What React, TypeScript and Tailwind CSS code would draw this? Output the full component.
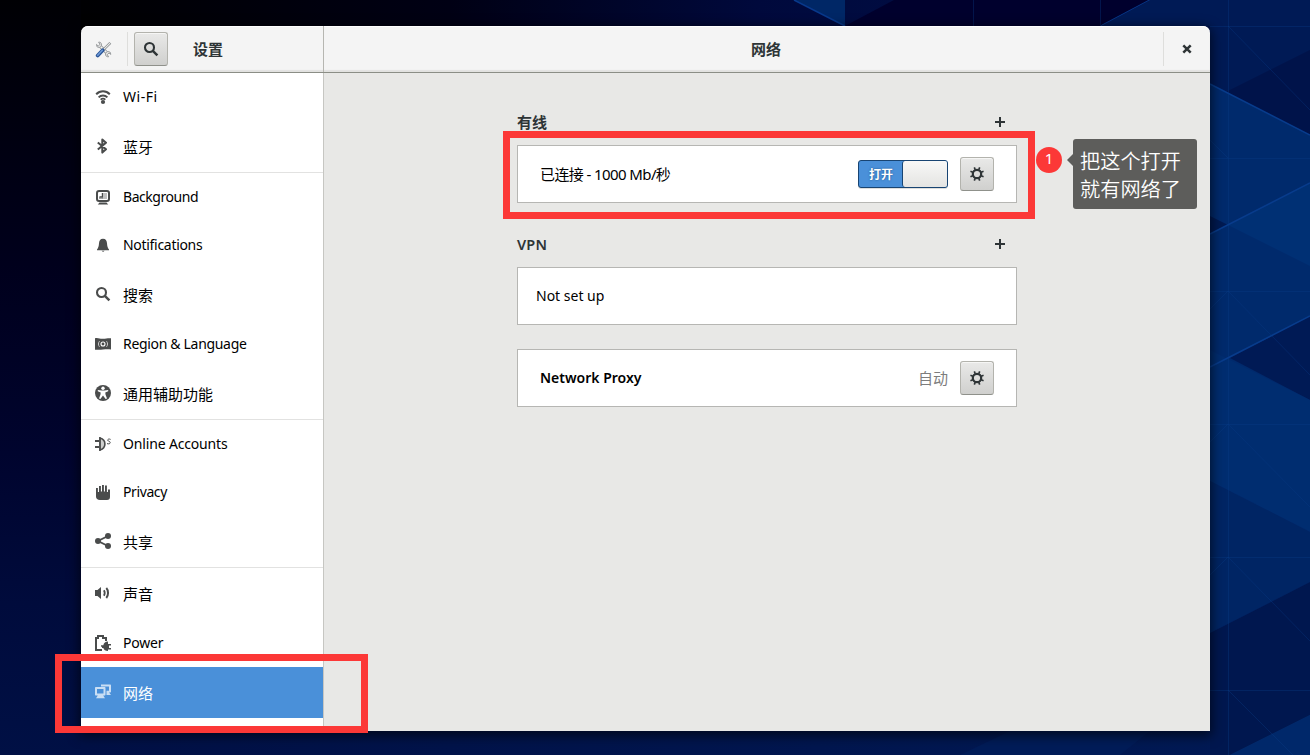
import type { ReactNode } from "react";

function Icon({ children, className = "" }: { children: ReactNode; className?: string }) {
  return (
    <svg width="16" height="16" viewBox="0 0 16 16" fill="currentColor" className={"block shrink-0 " + className}>
      {children}
    </svg>
  );
}

const icons: Record<string, ReactNode> = {
  wifi: (
    <>
      <path d="M1.2 5.200C5 1.400 11 1.400 14.800 5.200" fill="none" stroke="currentColor" strokeWidth="2" />
      <path d="M3.600 8.300C6 5.900 10 5.900 12.400 8.300" fill="none" stroke="currentColor" strokeWidth="1.900" />
      <path d="M5.600 10.600C7 9.400 9 9.400 10.400 10.600" fill="none" stroke="currentColor" strokeWidth="1.600" />
      <circle cx="8" cy="13" r="2.100" />
    </>
  ),
  bluetooth: (
    <path d="M2.800 4.400 11 11.300 7.300 14.600V1.400L11 4.700 2.800 11.600" fill="none" stroke="currentColor" strokeWidth="2" strokeLinejoin="round" />
  ),
  background: (
    <>
      <rect x="2" y="1.900" width="12" height="10.200" rx="2" fill="none" stroke="currentColor" strokeWidth="2" />
      <rect x="7.600" y="4" width="4.400" height="6" opacity=".35" />
      <path d="M4 8.800h4V4H6.800v3.200L4.600 7.200zM4 9.400h4v.6H4z" />
      <path d="M4.500 13.600h7l1.700 1.900H2.800z" />
    </>
  ),
  bell: (
    <>
      <path d="M8 1.800c2.800 0 3.800 2 4 4.400.2 3 .6 4.400 2 6.200v.8H2v-.8c1.400-1.800 1.800-3.200 2-6.200.2-2.400 1.200-4.400 4-4.400z" />
      <path d="M6.600 13.800h3L8.400 14.800H7.800z" />
    </>
  ),
  search: (
    <>
      <circle cx="6.500" cy="6.500" r="4.500" fill="none" stroke="currentColor" strokeWidth="2.100" />
      <path d="m9.800 9.800 4.600 4.600" stroke="currentColor" strokeWidth="2.400" />
    </>
  ),
  region: (
    <>
      <path d="M0 2.200c3-.8 5 .8 8 .6 3-.4 5-.8 8-.6v11.200c-3-.4-5-.2-8 0-3 .4-5 .2-8 .4z" />
      <circle cx="8" cy="8" r="2" fill="none" stroke="#fff" strokeWidth="1.100" />
      <path d="M4.500 5.200c-1.400 1.600-1.400 4 0 5.600M11.500 5.200c1.400 1.600 1.400 4 0 5.600" fill="none" stroke="#d8d8d8" strokeWidth=".9" />
    </>
  ),
  access: (
    <>
      <circle cx="8" cy="8" r="8" />
      <circle cx="8" cy="3.300" r="1.700" fill="#fff" />
      <path d="M2.800 4.900 6.600 5.500h2.800L13.200 4.900v1.400L10.300 7.500l.2 2 1.500 4-1.400.6L8 10.400 5.400 14.100l-1.400-.6 1.500-4 .2-2-2.900-1.200z" fill="#fff" />
    </>
  ),
  online: (
    <>
      <path d="M0 4.100h4v1.800H0zM0 10.100h4v1.800H0z" />
      <path d="M5 2c3 .8 4.900 3.200 4.900 6S8 13.200 5 14z" fill="#cfd0cf" stroke="currentColor" strokeWidth="1.600" />
      <path d="M4 1h1.800v14H4z" opacity=".8" />
      <path d="M15.600 3.400c-1.600-.8-3.200-.2-2.800 1 .4 1 2.200.8 2.400 2 .2 1.400-1.600 1.800-3.200 1.200" fill="none" stroke="currentColor" strokeWidth="1" />
    </>
  ),
  hand: (
    <path d="M1 4h1.900v4H4V2h1.900v5.500H7V1h1.900v6.500H10V1.600h1.900V8H13V5.500h2V13c0 2-1 3-3 3H5c-2.500 0-4-1.200-4-3.500z" />
  ),
  share: (
    <>
      <circle cx="3" cy="8" r="3" />
      <circle cx="13" cy="3" r="3" />
      <circle cx="13" cy="13" r="3" />
      <path d="M13 3 3 8l10 5" fill="none" stroke="currentColor" strokeWidth="1.900" />
    </>
  ),
  sound: (
    <>
      <path d="M0 5h2.500L6 2v12l-3.500-3H0z" />
      <path d="M8.900 5.300c1 1.600 1 3.800 0 5.400" fill="none" stroke="currentColor" strokeWidth="1.800" />
      <path d="M11.300 3c2.300 2.400 2.300 7.600 0 10" fill="none" stroke="currentColor" strokeWidth="2" />
    </>
  ),
  power: (
    <>
      <path d="M7 15H1V3h2V1h5v2h3v3" fill="none" stroke="currentColor" strokeWidth="2" />
      <path d="M6 10.200h2.300c.7-2.200 2-3.600 4.700-3.600V9h3v1.600h-2V13h2v1.600h-3V16c-2.700 0-4-1-4.700-3H7v-1.200H6z" />
    </>
  ),
  network: (
    <>
      <path fillRule="evenodd" d="M1 3h8.500c.6 0 1 .4 1 1v6.500c0 .6-.4 1-1 1h-1.300l1.800 2.700H1l1.800-2.700H1c-.6 0-1-.4-1-1V4c0-.6.4-1 1-1zm1 2v4.500h6.500V5z" />
      <path d="M6 .4h9c.6 0 1 .4 1 1v6c0 .6-.4 1-1 1h-1l2 2.600h-4.500V6.800H14V2.400H6z" />
    </>
  ),
};

type Entry = { icon: string; label: string; cjk?: boolean; line?: boolean; active?: boolean; track?: string };

const entries: Entry[] = [
  { icon: "wifi", label: "Wi-Fi", track: "tracking-[0.5px]" },
  { icon: "bluetooth", label: "蓝牙", cjk: true, line: true },
  { icon: "background", label: "Background", track: "tracking-[-0.45px]" },
  { icon: "bell", label: "Notifications", track: "tracking-[-0.3px]" },
  { icon: "search", label: "搜索", cjk: true },
  { icon: "region", label: "Region & Language", track: "tracking-[-0.32px]" },
  { icon: "access", label: "通用辅助功能", cjk: true, line: true },
  { icon: "online", label: "Online Accounts", track: "tracking-[-0.16px]" },
  { icon: "hand", label: "Privacy", track: "tracking-[-0.4px]" },
  { icon: "share", label: "共享", cjk: true, line: true },
  { icon: "sound", label: "声音", cjk: true },
  { icon: "power", label: "Power", track: "tracking-[-0.2px]" },
  { icon: "network", label: "网络", cjk: true, active: true },
];

function SidebarRow({ e }: { e: Entry }) {
  return (
    <li
      className={
        "flex shrink-0 items-start gap-3 pl-3.5 " +
        (e.cjk ? "pt-[17px] " : "h-12 pt-4 ") +
        (e.cjk ? (e.line ? "h-[52px] border-b border-[#e2e2e1] " : "h-[51px] ") : "") +
        (e.active ? "bg-[#4a90d9] text-white" : "text-black")
      }
    >
      <Icon className={e.active ? "text-[#c9def4]" : "text-[#4a4c4c]"}>{icons[e.icon]}</Icon>
      <span className={e.cjk ? "mt-px text-[15px] leading-4" : "text-sm leading-4 " + e.track}>{e.label}</span>
    </li>
  );
}

function Wallpaper() {
  return (
    <svg width="1310" height="755" viewBox="0 0 1310 755" className="absolute inset-0">
      <defs>
        <linearGradient id="left" x1="0" y1="0" x2="0" y2="1">
          <stop offset="0" stopColor="#000004" />
          <stop offset=".35" stopColor="#00001c" />
          <stop offset=".6" stopColor="#00042e" />
          <stop offset=".8" stopColor="#000b3c" />
          <stop offset="1" stopColor="#001045" />
        </linearGradient>
        <linearGradient id="top" x1="0" y1="0" x2="1" y2="0">
          <stop offset="0" stopColor="#000002" />
          <stop offset=".3" stopColor="#000014" />
          <stop offset=".55" stopColor="#00093c" />
          <stop offset="1" stopColor="#001550" />
        </linearGradient>
        <linearGradient id="bottom" x1="0" y1="0" x2="1" y2="0">
          <stop offset="0" stopColor="#001045" />
          <stop offset=".6" stopColor="#00164f" />
          <stop offset="1" stopColor="#001a55" />
        </linearGradient>
      </defs>
      <rect width="1310" height="755" fill="url(#left)" />
      <rect x="81" width="1229" height="60" fill="url(#top)" />
      <rect x="81" y="700" width="1229" height="55" fill="url(#bottom)" />
      <path d="M794 0 845 26V0z" fill="#002766" />
      <path d="M894 0 845 26H1101L1150 0z" fill="#00002d" />
      <path d="M794 0 845 26M1101 26 1150 0" stroke="#08398c" strokeWidth="1.500" fill="none" />
      <path d="M1101 26 1150 0H1310V135L1210 84V26z" fill="#001a55" />
      <path d="M1310 50V135L1210 84V100z" fill="#00134a" />
      <path d="M1210 84 1310 135V755H1210z" fill="#002a6c" />
      <path d="M1276 200 1310 183V266L1228 225z" fill="#003074" />
      <path d="M1210 216 1228 225 1210 234z" fill="#001a52" />
      <path d="M1230 358 1310 316V400z" fill="#001a55" />
      <path d="M1210 350 1310 400V532L1210 481z" fill="#002d70" />
      <path d="M1210 481 1310 532V582L1210 633z" fill="#002564" />
      <path d="M1210 633 1310 582V715L1230 755H1210z" fill="#00174f" />
      <path d="M1230 755 1310 715V755z" fill="#00286a" />
      <path d="M960 755 1010 731H1150L1120 755z" fill="#001c58" />
      <path
        d="M1228.500 0V755M1210 26.500H1310M1210 158.500H1310M1210 291.500H1310M1210 424.500H1310M1210 557.500H1310M1210 690.500H1310M1228 26 1310 110M1210 140 1228 158M1228 291 1310 375M1228 424 1310 507M1228 557 1310 641M1228 690 1293 755M1210 309 1228 291M1210 442 1228 424M1210 575 1228 557M973.500 0V26M1100.500 0V26"
        stroke="#0a3b86"
        strokeOpacity=".35"
        fill="none"
      />
      <path d="M1210 84 1310 135M1210 234 1310 183M1210 367 1310 316" stroke="#083c8c" strokeWidth="1.500" fill="none" />
    </svg>
  );
}

function ToolsIcon() {
  return (
    <svg width="17" height="17" viewBox="0 0 17 17" className="block" fill="none">
      <path d="M4.500 4.500 12.800 12.800" stroke="#96999a" strokeWidth="3.200" />
      <path d="M4.500 4.500 12.800 12.800" stroke="#f3f3f2" strokeWidth="1.600" />
      <path d="M1.500 3.400 3.200 5 5 3.400 3.600 1.200C5.400.8 6.800 2.200 6.400 4.300 5.800 6.600 3.500 7 1.900 5.600zM15.800 13.400 14 12 12.200 13.600 13.600 15.800c-2 .2-3.400-1-3-3.200.6-2.200 3-2.600 4.700-1.200z" fill="#ececeb" stroke="#8f9294" strokeWidth=".9" />
      <path d="M8 9.200 15.300 1.800" stroke="#85898b" strokeWidth="2.600" />
      <path d="M8 9.200 15 2.100" stroke="#eeeeed" strokeWidth="1.100" />
      <path d="m2.700 14.500 5-5.200" stroke="#2b5698" strokeWidth="3.800" strokeLinecap="round" />
      <path d="m2.700 14.200 4.600-4.900" stroke="#6f9bd8" strokeWidth="1.600" strokeLinecap="round" />
    </svg>
  );
}

function Gear() {
  return (
    <Icon className="text-[#2e3436]">
      <circle cx="8" cy="8" r="4.200" fill="none" stroke="currentColor" strokeWidth="2.200" />
      <g stroke="currentColor" strokeWidth="1.700">
        <path d="M8 .9v2.500M8 12.600v2.500M.9 8h2.500M12.600 8h2.500" transform="rotate(22.500 8 8)" />
        <path d="M8 .9v2.500M8 12.600v2.500M.9 8h2.500M12.600 8h2.500" transform="rotate(67.500 8 8)" />
      </g>
    </Icon>
  );
}

const buttonClass =
  "flex size-[34px] shrink-0 items-center justify-center rounded-[3px] border border-[#b3b3ad] border-b-[#8f918b] bg-linear-to-b from-[#e9e9e8] to-[#d0d0ce] shadow-[inset_0_1px_0_#f6f6f5]";

function Plus() {
  return (
    <svg width="10" height="10" viewBox="0 0 10 10" className="mr-3 block" fill="#2e3436">
      <path d="M4 0h2v4h4v2H6v4H4V6H0V4h4z" />
    </svg>
  );
}

export default function App() {
  return (
    <div className="relative h-[755px] w-[1310px] overflow-hidden bg-[#000018] pt-[26px] pl-[81px] font-['Noto_Sans','Noto_Sans_CJK_SC',sans-serif]">
      <Wallpaper />
      <div className="relative flex h-[705px] w-[1129px] flex-col rounded-t-[7px] shadow-[0_3px_12px_2px_rgba(0,0,0,0.6)]">
        <header className="flex h-[47px] shrink-0 rounded-t-[7px] border-b border-[#8b8e86] bg-[#f4f4f4] text-[15px] font-bold text-[#2e3436] shadow-[inset_0_1px_0_#fff,inset_0_-2px_1px_#e2e2e0]">
          <div className="flex h-[46px] w-[243px] shrink-0 items-center border-r border-[#b6b6b1] pl-3.5">
            <ToolsIcon />
            <div className="ml-[15px] h-[34px] w-px bg-[#dededc]" />
            <div className={buttonClass + " ml-1.5"}>
              <Icon>{icons.search}</Icon>
            </div>
            <h1 className="ml-[25px]">设置</h1>
          </div>
          <div className="flex h-[46px] flex-1 items-center">
            <h2 className="w-[839px] pl-[45px] text-center">网络</h2>
            <div className="h-[34px] w-px bg-[#dededc]" />
            <div className="flex flex-1 justify-center">
              <svg width="10" height="10" viewBox="0 0 10 10" className="block">
                <path d="m1.300 1.300 7.400 7.400M8.700 1.300 1.300 8.700" stroke="#2e3436" strokeWidth="2.500" />
              </svg>
            </div>
          </div>
        </header>

        <div className="flex min-h-0 flex-1">
          <ul className="flex w-[243px] shrink-0 flex-col overflow-hidden border-r border-[#c6c6c2] bg-white">
            {entries.map((e) => (
              <SidebarRow key={e.label} e={e} />
            ))}
          </ul>

          <main className="flex flex-1 flex-col bg-[#e8e8e6] pt-[37px] pl-[193px] text-black">
            <section className="w-[500px]">
              <div className="flex h-[35px] items-start justify-between">
                <h3 className="text-[15px] leading-6 font-bold text-[#2e3436]">有线</h3>
                <div className="pt-[7px]">
                  <Plus />
                </div>
              </div>
              <div className="flex h-[58px] items-center border border-[#b6b6b3] bg-white pr-[22px] pl-[22px]">
                <span className="flex-1 text-[15px] tracking-[-0.6px]">已连接 - 1000 Mb/秒</span>
                <div className="flex h-7 w-[90px] rounded-[3px] border border-[#184472] bg-[#4a90d9] shadow-[0_1px_0_#dededc]">
                  <span className="flex w-[43px] items-center justify-center pt-px pl-px text-xs font-bold text-white [text-shadow:0_0_2px_#1c5187]">打开</span>
                  <span className="flex-1 rounded-r-[2px] rounded-l-[3px] border-l border-[#184472] bg-linear-to-b from-[#f8f8f7] to-[#e4e4e2]" />
                </div>
                <div className={buttonClass + " ml-3"}>
                  <Gear />
                </div>
              </div>
            </section>

            <section className="mt-[29px] w-[500px]">
              <div className="flex h-[35px] items-start justify-between">
                <h3 className="text-[14.5px] leading-6 font-semibold tracking-[0.2px] text-[#2e3436]">VPN</h3>
                <div className="pt-[7px]">
                  <Plus />
                </div>
              </div>
              <div className="flex h-[58px] items-center border border-[#b6b6b3] bg-white pl-[18px] text-sm">Not set up</div>
            </section>

            <section className="mt-6 flex h-[58px] w-[500px] items-center border border-[#b6b6b3] bg-white px-[22px]">
              <span className="flex-1 text-sm font-semibold">Network Proxy</span>
              <span className="text-[15px] text-[#7d7d7d]">自动</span>
              <div className={buttonClass + " ml-3"}>
                <Gear />
              </div>
            </section>
          </main>
        </div>
      </div>

      <div className="absolute top-[131px] left-[503px] h-[88px] w-[532px] border-7 border-[#fc3837]" />
      <div className="absolute top-[654px] left-[55px] h-[79px] w-[313px] border-7 border-[#fc3837]" />
      <div className="absolute top-[147px] left-[1036px] flex size-[26px] items-center justify-center rounded-full bg-[#fc3837] pb-[3px] text-[15px] text-white">
        1
      </div>
      <div className="absolute top-[139px] left-[1067px] flex">
        <svg width="6" height="14" viewBox="0 0 6 14" className="mt-3.5 block">
          <path d="M6 1 0 7l6 6z" fill="#5d5d5b" />
        </svg>
        <p className="h-[70px] w-[124px] rounded-[3px] bg-[#5d5d5b] pt-2 pl-[7px] text-[20.2px] leading-7 font-[350] text-white">
          把这个打开
          <br />
          就有网络了
        </p>
      </div>
    </div>
  );
}
